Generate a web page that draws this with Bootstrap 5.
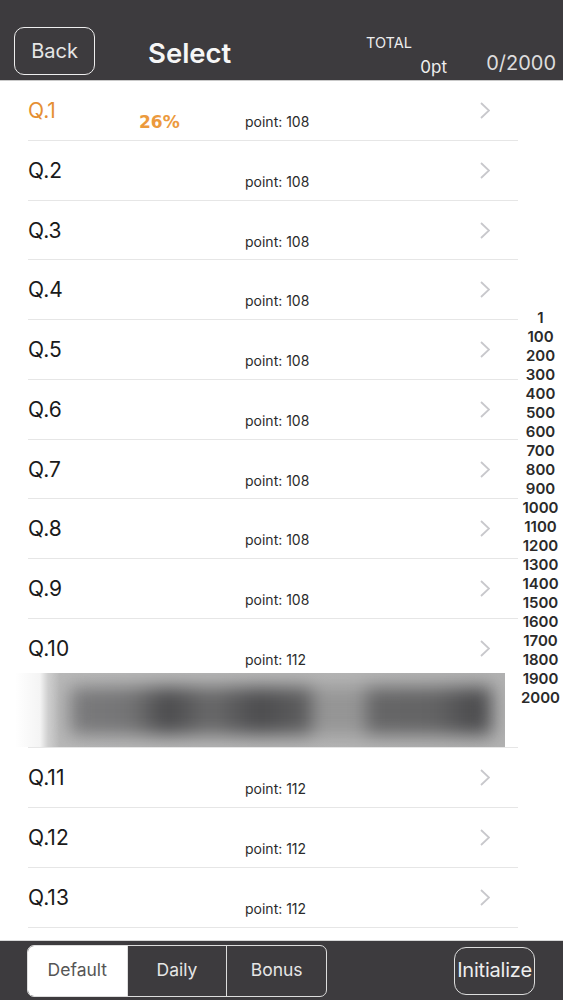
<!DOCTYPE html>
<html lang="en">
<head>
<meta charset="utf-8">
<title>Select</title>
<link rel="stylesheet" href="https://cdn.jsdelivr.net/npm/bootstrap@5.3.0/dist/css/bootstrap.min.css">
<style>
html,body{height:1000px;overflow:hidden;background:#fff}
body{font-family:Inter,"Liberation Sans",sans-serif;color:#1a1a1a}
.shell{height:1000px}
.topbar{height:81px;flex:none;background:#3d3b3e;color:#f4f4f4;border-bottom:1px solid #c9c9c9;padding:27px 7px 0 14px}
.back-btn{width:81px;height:48px;border:1.5px solid #eee;border-radius:10px;font-size:20px;color:#e6e6e6;line-height:47px;text-align:center}
.page-title{font-size:27.5px;font-weight:600;margin-left:53px;line-height:53px;color:#f6f6f6}
.total-box{margin-left:auto;width:190px;height:50px}
.total-label{font-size:14.5px;margin-top:8px;color:#eee;line-height:16px}
.total-line{font-size:17px;color:#eee;line-height:20px}
.total-pt{width:81px;text-align:right;padding-top:6px}
.total-count{font-size:20px;margin-left:auto;color:#ddd;line-height:24px}
.list-area{width:518px;padding-left:28px}
.q-row{height:59.75px;border-bottom:1px solid #e6e6e6}
.q-row.cut{height:54.5px;border-bottom:0}
.q-row.tail{height:60px}
.q-name{font-size:21px;line-height:26px;padding-top:17px;width:111px}
.q-row.hot .q-name{color:#e58f33}
.q-rate{width:106px;font-family:"DejaVu Sans",sans-serif;font-weight:700;font-size:17px;color:#ec9a3d;padding-top:31px;line-height:20px}
.q-pt{font-size:14px;line-height:16px;padding-top:33px;width:235px;color:#2b2b2b}
.chev{width:10px;height:17px;margin-top:21px;flex:none}
.ad-wrap{height:75px;border-bottom:1px solid #e6e6e6}
.ad-clip{width:505px;height:74px;margin-left:-28px;background:linear-gradient(90deg,#fff 0,#fff 15px,#f4f4f4 40px,#cfcfcf 48px,#b8b8b8 60px,#b2b2b2 100%);overflow:hidden}
.ad-blur{height:100%;padding:14px 13px 12px 70px;filter:blur(9px)}
.ad-a{height:100%}
.ad-a1{width:242px;background:linear-gradient(90deg,#7a7a7c 0,#747475 25%,#4a4a4c 40%,#6a6a6b 58%,#4c4c4e 78%,#606061 100%)}
.ad-a3{width:54px;background:#959595}
.ad-a4{flex:1;background:linear-gradient(90deg,#666667 0,#636364 55%,#4c4c4e 85%,#525254 100%)}
.rail{width:45px;font-size:15px;font-weight:600;line-height:19px;text-align:center;color:#2a2a2a;padding-bottom:6px}
.bottombar{height:60px;flex:none;background:#3d3b3e;padding:4px 28px 0 26px;border-top:1px solid #d8d8d8}
.seg{height:52px;width:300px;border:1.5px solid #ddd;border-radius:7px;font-size:17.5px;color:#e6e6e6;overflow:hidden;margin-left:1px}
.seg-item{flex:1;line-height:48px;text-align:center}
.seg-item+.seg-item{border-left:1.5px solid #ddd}
.seg-item.on{background:#fff;color:#555}
.init-btn{margin-left:auto;margin-top:2px;width:81px;height:48px;border:1.5px solid #ddd;border-radius:12px;font-size:20px;line-height:45px;text-align:center;color:#eee;letter-spacing:-.2px;white-space:nowrap}
</style>
</head>
<body>
<div class="shell d-flex flex-column">
  <div class="topbar d-flex align-items-start">
    <div class="back-btn">Back</div>
    <div class="page-title">Select</div>
    <div class="total-box">
      <div class="total-label">TOTAL</div>
      <div class="d-flex total-line">
        <div class="total-pt">0pt</div>
        <div class="total-count">0/2000</div>
      </div>
    </div>
  </div>
  <div class="d-flex flex-grow-1 overflow-hidden">
    <div class="list-area" id="list"></div>
    <div class="rail d-flex flex-column justify-content-center" id="rail"></div>
  </div>
  <div class="bottombar d-flex align-items-start">
    <div class="seg d-flex">
      <div class="seg-item on">Default</div>
      <div class="seg-item">Daily</div>
      <div class="seg-item">Bonus</div>
    </div>
    <div class="init-btn">Initialize</div>
  </div>
</div>
<script>
var list=document.getElementById('list'),html='';
var chev='<svg class="chev" viewBox="0 0 10 17"><path d="M1 1 9 8.5 1 16" fill="none" stroke="#c8c8cc" stroke-width="1.8"/></svg>';
for(var i=1;i<=13;i++){
  var p=i<10?108:112;
  html+='<div class="q-row d-flex'+(i==1?' hot':'')+(i==10?' cut':'')+(i>10?' tail':'')+'">'
    +'<div class="q-name">Q.'+i+'</div>'
    +'<div class="q-rate">'+(i==1?'26%':'')+'</div>'
    +'<div class="q-pt">point: '+p+'</div>'+chev+'</div>';
  if(i==10){html+='<div class="ad-wrap"><div class="ad-clip"><div class="ad-blur d-flex"><div class="ad-a ad-a1"></div><div class="ad-a ad-a3"></div><div class="ad-a ad-a4"></div></div></div></div>';}
}
list.innerHTML=html;
var r=['1'];for(var n=100;n<=2000;n+=100)r.push(n);
document.getElementById('rail').innerHTML=r.map(function(x){return '<div>'+x+'</div>'}).join('');
</script>
<script src="https://cdn.jsdelivr.net/npm/bootstrap@5.3.0/dist/js/bootstrap.bundle.min.js"></script>
</body>
</html>
